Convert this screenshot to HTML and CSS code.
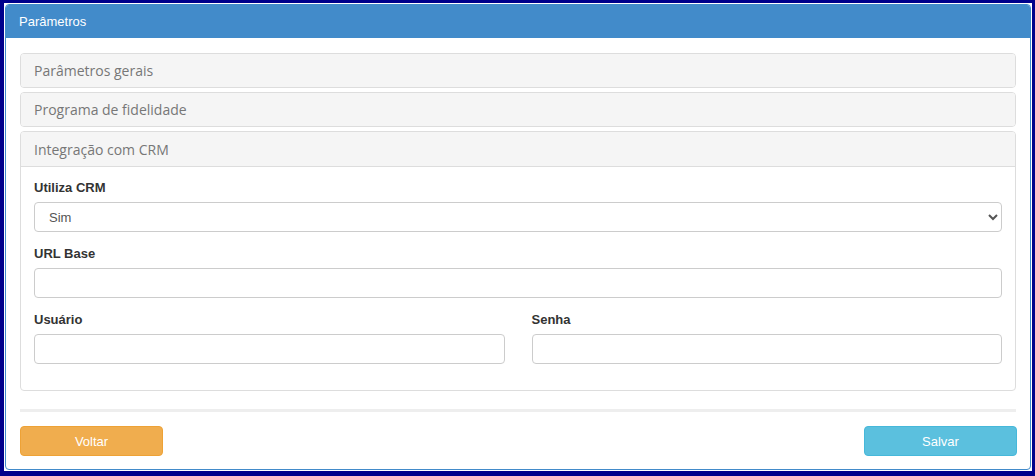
FILE: index.html
```html
<!DOCTYPE html>
<html lang="pt">
<head>
<meta charset="utf-8">
<title>Parâmetros</title>
<link rel="stylesheet" href="styles.css">
</head>
<body>
<div class="frame">
  <div class="panel">
    <div class="panel-header">Parâmetros</div>
    <div class="panel-body">
      <div class="accordion">
        <div class="acc-item">
          <div class="acc-heading">Parâmetros gerais</div>
        </div>
        <div class="acc-item">
          <div class="acc-heading">Programa de fidelidade</div>
        </div>
        <div class="acc-item">
          <div class="acc-heading open">Integração com CRM</div>
          <div class="acc-body">
            <div class="group">
              <label class="label">Utiliza CRM</label>
              <select class="control select">
                <option>Sim</option>
                <option>Não</option>
              </select>
            </div>
            <div class="group">
              <label class="label">URL Base</label>
              <input class="control" type="text">
            </div>
            <div class="row">
              <div class="group">
                <label class="label">Usuário</label>
                <input class="control" type="text">
              </div>
              <div class="group">
                <label class="label">Senha</label>
                <input class="control" type="password">
              </div>
            </div>
          </div>
        </div>
      </div>
      <div class="divider"></div>
      <div class="actions">
        <button class="btn btn-warning" type="button">Voltar</button>
        <button class="btn btn-info" type="button">Salvar</button>
      </div>
    </div>
  </div>
</div>
</body>
</html>
```

FILE: styles.css
```css
html, body {
  margin: 0;
  height: 100%;
}
body {
  background: #00008b;
  padding: 3px 3px 5px 4px;
  box-sizing: border-box;
  font-family: "Liberation Sans", Arial, sans-serif;
  font-size: 13px;
  color: #333;
}
.frame {
  background: #fff;
  padding: 1px;
  height: 100%;
  box-sizing: border-box;
}
.panel {
  border: 1px solid #428bca;
  border-radius: 4px;
  height: 100%;
  box-sizing: border-box;
  background: #fff;
  overflow: hidden;
}
.panel-header {
  background: #428bca;
  color: #fff;
  height: 33px;
  display: flex;
  align-items: center;
  padding-left: 13px;
  font-size: 13px;
}
.panel-body {
  padding: 15px 14px 12px 14px;
}
.accordion {
  display: flex;
  flex-direction: column;
  gap: 4px;
}
.acc-item {
  border: 1px solid #ddd;
  border-radius: 4px;
  overflow: hidden;
}
.acc-heading {
  background: #f5f5f5;
  height: 33px;
  display: flex;
  align-items: center;
  padding-left: 13px;
  font-family: "Open Sans", sans-serif;
  font-size: 14px;
  color: #777;
}
.acc-heading.open {
  height: 34px;
  border-bottom: 1px solid #ddd;
}
.acc-body {
  padding: 13px 13px 12px 13px;
  display: flex;
  flex-direction: column;
  gap: 14px;
}
.group {
  display: flex;
  flex-direction: column;
  gap: 6px;
  min-width: 0;
}
.row {
  display: grid;
  grid-template-columns: 1fr 1fr;
  column-gap: 27px;
  padding-bottom: 14px;
}
.label {
  font-weight: bold;
  font-size: 13px;
  line-height: 16px;
  color: #333;
}
.control {
  height: 30px;
  box-sizing: border-box;
  border: 1px solid #ccc;
  border-radius: 4px;
  background: #fff;
  font-family: "Liberation Sans", Arial, sans-serif;
  font-size: 13px;
  color: #555;
  padding: 0 12px;
  width: 100%;
  margin: 0;
}
.select {
  padding-left: 10px;
}
.divider {
  height: 3px;
  background: #eee;
  margin-top: 18px;
}
.actions {
  display: flex;
  justify-content: space-between;
  margin-top: 14px;
  margin-right: -1px;
}
.btn {
  height: 30px;
  border-radius: 4px;
  font-family: "Liberation Sans", Arial, sans-serif;
  font-size: 13px;
  color: #fff;
  cursor: pointer;
}
.btn-warning {
  width: 143px;
  background: #f0ad4e;
  border: 1px solid #eea236;
}
.btn-info {
  width: 153px;
  background: #5bc0de;
  border: 1px solid #46b8da;
}
```
